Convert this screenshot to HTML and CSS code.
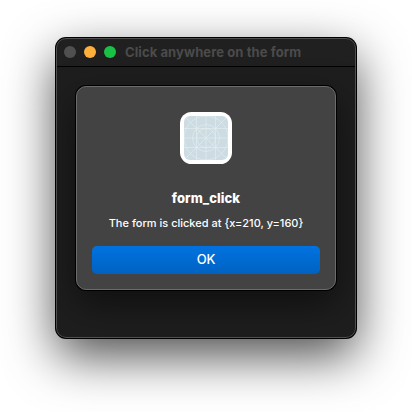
FILE: index.html
```
<!DOCTYPE html>
<html lang="en">
<head>
<meta charset="utf-8">
<title>Click anywhere on the form</title>
<link rel="stylesheet" href="styles.css">
</head>
<body>
<main class="window">
  <header class="titlebar">
    <span class="light light-close"></span>
    <span class="light light-minimize"></span>
    <span class="light light-zoom"></span>
    <h1 class="window-title">Click anywhere on the form</h1>
  </header>
  <section class="dialog" role="alertdialog">
    <svg class="app-icon" viewBox="0 0 52 52" aria-hidden="true">
      <defs><clipPath id="tile"><rect x="4" y="4" width="44" height="44" rx="6"/></clipPath></defs>
      <rect width="52" height="52" rx="11.5" fill="#fff"/>
      <rect x="4" y="4" width="44" height="44" rx="6" fill="#cddce2"/>
      <g clip-path="url(#tile)" fill="none" stroke="#e4eef2" stroke-width=".6">
        <path d="M4 4 48 48M48 4 4 48M16.5 4V48M26 4V48M35.5 4V48M4 16.5H48M4 26H48M4 35.5H48"/>
        <circle cx="26" cy="26" r="22"/>
        <circle cx="26" cy="26" r="13.5"/>
        <circle cx="26" cy="26" r="9.5"/>
      </g>
    </svg>
    <h2 class="dialog-title">form_click</h2>
    <p class="dialog-message">The form is clicked at {x=210, y=160}</p>
    <button class="ok-button" type="button">OK</button>
  </section>
</main>
</body>
</html>
```
FILE: styles.css
```
* { box-sizing: border-box; }
body {
  margin: 0;
  height: 412px;
  padding: 38px 0 0 56px;
  overflow: hidden;
  background: #fff;
  font-family: Inter, "Liberation Sans", sans-serif;
}
.window {
  width: 300px;
  height: 300px;
  border-radius: 10px;
  overflow: clip;
  background: #1e1e1e;
  box-shadow: 0 0 0 1px #000, 0 18px 50px rgba(0, 0, 0, .7);
  position: relative;
}
.window::after {
  content: "";
  position: absolute;
  inset: 0;
  border: 1px solid #505050;
  border-radius: 10px;
}
.titlebar {
  display: flex;
  align-items: center;
  gap: 8px;
  height: 29px;
  padding-left: 8px;
  border-bottom: 1px solid #000;
  background: #202020;
}
.light {
  width: 12px;
  height: 12px;
  border-radius: 50%;
}
.light-close { background: #505050; }
.light-minimize { background: #ffb03a; }
.light-zoom { background: #19c245; }
.window-title {
  margin: 0 0 1px 1px;
  font-size: 13px;
  font-weight: 700;
  line-height: 16px;
  letter-spacing: .09px;
  white-space: nowrap;
  color: #4b4b4b;
}
.dialog {
  display: flex;
  flex-direction: column;
  align-items: center;
  width: 260px;
  height: 204px;
  margin: 19px 0 0 20px;
  padding: 25px 15px 15px;
  border: 1px solid #6b6b6b;
  border-radius: 10px;
  background: #434343;
  color: #fff;
  box-shadow: 0 0 0 1px #000, 0 14px 36px rgba(0, 0, 0, .5);
}
.app-icon {
  display: block;
  width: 52px;
  height: 52px;
  flex: none;
}
.dialog-title {
  margin: 26px 0 0;
  font-size: 13px;
  font-weight: 800;
  line-height: 16px;
  letter-spacing: .08px;
}
.dialog-message {
  margin: 10px 0 0;
  font-size: 11px;
  font-weight: 500;
  line-height: 14px;
  white-space: nowrap;
}
.ok-button {
  width: 228px;
  height: 28px;
  margin: auto 0 0;
  padding: 0 0 2px;
  border: 0;
  border-radius: 5px;
  background: linear-gradient(#0073e0, #0062c2);
  color: #fff;
  font: 500 13px/26px Inter, "Liberation Sans", sans-serif;
  letter-spacing: -.3px;
}
```
